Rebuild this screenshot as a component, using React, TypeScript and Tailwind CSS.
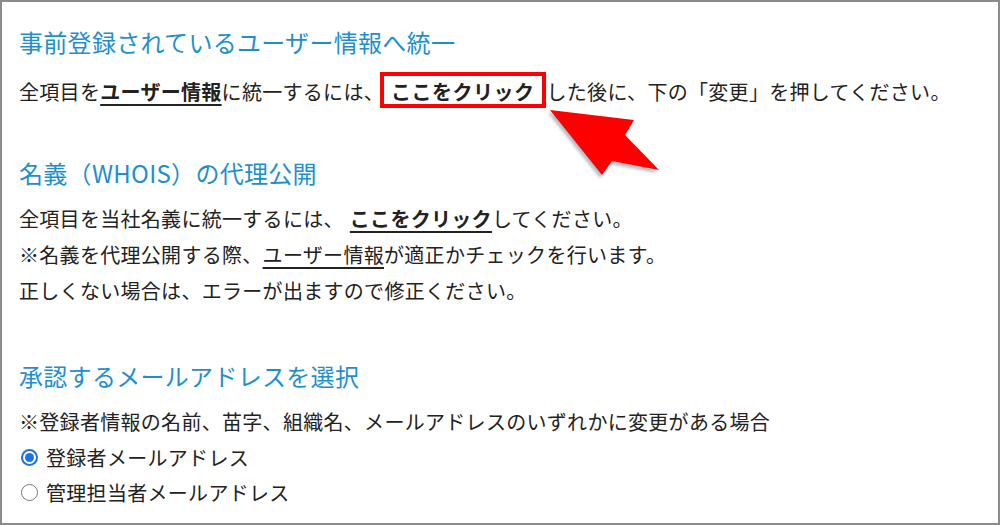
import React from 'react'

const font = { fontFamily: '"Noto Sans CJK JP", "Noto Sans", sans-serif' }

function Radio({ checked, label }: { checked?: boolean; label: string }) {
  return (
    <label className="flex items-center h-[35px] gap-[8px] pl-[2px]">
      {checked ? (
        <span className="w-[17px] h-[17px] rounded-full bg-[#1a73e8] flex items-center justify-center">
          <span className="w-[13px] h-[13px] rounded-full bg-white flex items-center justify-center">
            <span className="w-[9px] h-[9px] rounded-full bg-[#1a73e8]" />
          </span>
        </span>
      ) : (
        <span className="w-[17px] h-[17px] rounded-full border border-[#767676] bg-white" />
      )}
      <span>{label}</span>
    </label>
  )
}

export default function App() {
  return (
    <div
      className="relative w-[1000px] h-[525px] border-2 border-[#8a8a8a] bg-white text-[#222] pl-[17px] pt-[22px] overflow-hidden"
      style={font}
    >
      {/* 事前登録 */}
      <h2 className="text-[24px] leading-[36px] tracking-[0.3px] text-[#1e8fce] mb-[14px]">事前登録されているユーザー情報へ統一</h2>
      <p className="text-[20px] leading-[36px] tracking-[0.3px] whitespace-nowrap">
        全項目を<span className="font-bold underline decoration-2 underline-offset-[4px]">ユーザー情報</span>に統一するには、
        <span className="relative ml-[7px] mr-[12px]">
          <span className="font-bold underline decoration-2 underline-offset-[4px] tracking-[0.5px]">ここをクリック</span>
          <span className="absolute -left-[11px] -right-[11px] -top-[5px] -bottom-[2px] border-4 border-[#ff0000]" />
        </span>
        した後に、下の「変更」を押してください。
      </p>

      {/* WHOIS */}
      <h2 className="text-[24px] leading-[36px] tracking-[0.3px] text-[#1e8fce] mt-[45px] mb-[10px]">名義（WHOIS）の代理公開</h2>
      <div className="text-[20px] leading-[36px] tracking-[0.3px] whitespace-nowrap">
        <p>
          全項目を当社名義に統一するには、
          <span className="ml-[6px] font-bold underline decoration-2 underline-offset-[4px]">ここをクリック</span>
          してください。
        </p>
        <p>
          ※名義を代理公開する際、<span className="underline underline-offset-[4px]">ユーザー情報</span>が適正かチェックを行います。
        </p>
        <p>正しくない場合は、エラーが出ますので修正ください。</p>
      </div>

      {/* メールアドレス */}
      <h2 className="text-[24px] leading-[36px] tracking-[0.3px] text-[#1e8fce] mt-[49px] mb-[10px]">承認するメールアドレスを選択</h2>
      <div className="text-[20px] leading-[36px] tracking-[0.3px] whitespace-nowrap">
        <p>※登録者情報の名前、苗字、組織名、メールアドレスのいずれかに変更がある場合</p>
        <Radio checked label="登録者メールアドレス" />
        <Radio label="管理担当者メールアドレス" />
      </div>

      {/* arrow */}
      <svg className="absolute left-0 top-0 pointer-events-none" width="1000" height="525">
        <defs>
          <filter id="sh" x="-20%" y="-20%" width="140%" height="140%">
            <feGaussianBlur stdDeviation="1.5" />
          </filter>
        </defs>
        <polygon
          points="546,111 630,121 621,136 655,171 608,162 598,176"
          fill="#9aa0a6"
          opacity="0.7"
          filter="url(#sh)"
        />
        <polygon points="548,108 632,118 623,133 657,168 610,159 600,173" fill="#ff0000" />
      </svg>
    </div>
  )
}
